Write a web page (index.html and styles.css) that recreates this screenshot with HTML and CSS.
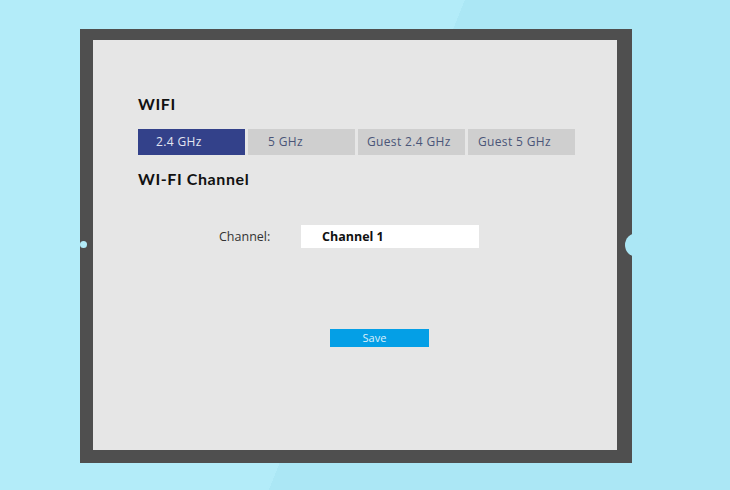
FILE: index.html
```html
<!DOCTYPE html>
<html>
<head>
<meta charset="utf-8">
<link rel="stylesheet" href="styles.css">
</head>
<body>
<div class="frame">
  <span class="hole hole-left"></span>
  <span class="hole hole-right"></span>
  <div class="panel">
    <h2 class="title">WIFI</h2>
    <div class="tabs">
      <div class="tab tab-active tab-a">2.4 GHz</div>
      <div class="tab tab-b">5 GHz</div>
      <div class="tab tab-c">Guest 2.4 GHz</div>
      <div class="tab tab-d">Guest 5 GHz</div>
    </div>
    <h2 class="subtitle">WI-FI Channel</h2>
    <div class="row">
      <label class="label">Channel:</label>
      <div class="select">Channel 1</div>
    </div>
    <div class="actions">
      <button class="save">Save</button>
    </div>
  </div>
</div>
</body>
</html>
```
FILE: styles.css
```css
html, body {
  margin: 0;
  padding: 0;
}
body {
  width: 730px;
  height: 490px;
  overflow: hidden;
  background: linear-gradient(111.8deg, #b3ecf9 50.2%, #abe7f5 50.2%);
  font-family: "Open Sans", "Liberation Sans", sans-serif;
  padding: 29px 0 0 80px;
  box-sizing: border-box;
}
.frame {
  position: relative;
  width: 552px;
  height: 434px;
  box-sizing: border-box;
  background: #4f4f4f;
  padding: 11px 15px 13px 13px;
}
.hole {
  position: absolute;
  border-radius: 50%;
}
.hole-left {
  width: 7px;
  height: 7px;
  left: 0;
  top: 212px;
  background: #b3ecf9;
}
.hole-right {
  width: 24px;
  height: 24px;
  left: 545px;
  top: 204px;
  background: #abe7f5;
}
.panel {
  height: 100%;
  background: #e6e6e6;
  padding: 54px 0 0 45px;
  box-sizing: border-box;
}
.title, .subtitle {
  margin: 0;
  font-family: "Lato", sans-serif;
  font-weight: 700;
  color: #111;
  font-size: 16px;
  line-height: 20px;
  letter-spacing: 0.6px;
}
.tabs {
  display: flex;
  gap: 3.5px;
  margin-top: 15px;
}
.tab {
  width: 106.5px;
  height: 26px;
  line-height: 26px;
  font-size: 12px;
  color: #4a5578;
  background: #cfcfcf;
  box-sizing: border-box;
  letter-spacing: 0.35px;
}
.tab-active {
  background: #33418a;
  color: #e3e6f1;
}
.tab-a { padding-left: 18px; }
.tab-b { padding-left: 20px; }
.tab-c { padding-left: 9px; }
.tab-d { padding-left: 10px; }
.subtitle {
  margin-top: 14px;
}
.row {
  display: flex;
  align-items: center;
  margin-top: 36px;
  padding-left: 81px;
}
.label {
  width: 82px;
  font-size: 12.5px;
  color: #333;
}
.select {
  width: 178px;
  height: 23px;
  line-height: 23px;
  background: #fff;
  padding-left: 21px;
  box-sizing: border-box;
  font-size: 12.5px;
  font-weight: 700;
  color: #111;
}
.actions {
  margin-top: 81px;
  padding-left: 192px;
}
.save {
  display: block;
  width: 99px;
  height: 18px;
  border: 0;
  padding: 0 10px 0 0;
  background: #049fe6;
  color: #dcf0fb;
  font-family: "Open Sans", sans-serif;
  font-size: 11px;
  line-height: 18px;
}
```
